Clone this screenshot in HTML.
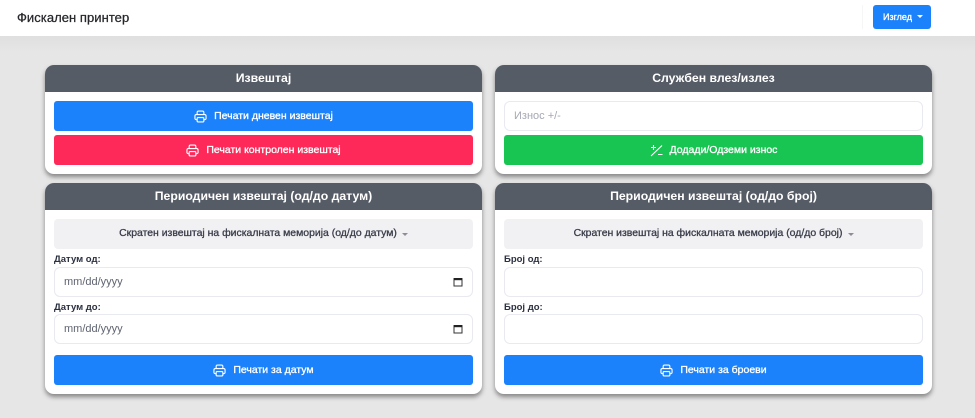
<!DOCTYPE html>
<html lang="mk"><head><meta charset="utf-8"><title>Фискален принтер</title>
<style>
*{box-sizing:border-box}
html,body{margin:0;padding:0}
body{width:975px;height:418px;overflow:hidden;position:relative;background:#e6e6e6;font-family:"Liberation Sans",sans-serif;color:#2b3040}
.a{position:absolute}
.nav{left:0;top:0;width:975px;height:36px;background:#fff}
.shade{left:0;top:36px;width:975px;height:16px;background:linear-gradient(#dfdfdf,#e6e6e6)}
.brand{left:17px;top:9px;font-size:13px;line-height:17px;font-weight:400;color:#26272b;letter-spacing:.05px;-webkit-text-stroke:.25px #26272b}
.view{left:873px;top:5px;width:58px;height:24px;background:#1b82fb;border-radius:3px;color:#fff;font-size:9px;font-weight:400;-webkit-text-stroke:.3px #fff;line-height:24px;padding-left:10px}
.view i,.dd i{position:absolute;width:0;height:0;border-left:3px solid transparent;border-right:3px solid transparent}
.view i{left:44px;top:10px;border-top:3px solid #fff;-webkit-text-stroke:0}
.card{background:#fff;border-radius:9px;box-shadow:0 3px 5px rgba(0,0,0,.42);overflow:hidden}
.hd{left:0;top:0;width:437px;height:27px;background:#565c66;color:#fff;text-align:center;font-size:12.25px;font-weight:700;line-height:27px}
.btn{width:419px;height:30px;border-radius:3px;color:#fff;font-size:10.5px;font-weight:400;-webkit-text-stroke:.3px #fff;line-height:31px;text-align:center}
.btn span{display:inline-flex;align-items:center;justify-content:center;gap:7px}
.btn svg{display:block;-webkit-text-stroke:0}
.blue{background:#1b82fb}.red{background:#fe2859}.green{background:#19c552}
.inp{width:419px;height:30px;border:1px solid #e8e9f1;border-radius:6px;background:#fff;font-size:11px;line-height:29px;padding-left:9px;color:#5f6470}
.dd{width:419px;height:30px;border-radius:4px;background:#f1f1f3;font-size:10.45px;font-weight:400;line-height:30px;text-align:center;padding-right:11px;color:#3a3d4a;-webkit-text-stroke:.3px #3a3d4a}
.dd i{border-top:3px solid #8b8e96}
.lb{font-size:9.5px;font-weight:700;line-height:12px;color:#2b3040}
</style></head><body>
<div class="a shade"></div>
<div class="a nav"></div>
<div class="a" style="left:862px;top:5px;width:1px;height:24px;background:#f6f6f6"></div>
<div class="a brand">Фискален принтер</div>
<div class="a view">Изглед<i></i></div>

<svg width="0" height="0" style="position:absolute"><defs>
<symbol id="pr" viewBox="0 0 14 14"><path d="M3.4 4.9V2.6a1.5 1.5 0 0 1 1.5-1.5h4.2a1.5 1.5 0 0 1 1.5 1.5v2.3M3.4 10.4H2.4A1.4 1.4 0 0 1 1 9V6.4A1.5 1.5 0 0 1 2.5 4.9h9A1.5 1.5 0 0 1 13 6.4V9a1.4 1.4 0 0 1-1.4 1.4h-1M4.4 8.2h5.2a1 1 0 0 1 1 1v2.6a1 1 0 0 1-1 1H4.4a1 1 0 0 1-1-1V9.200a1 1 0 0 1 1-1z" fill="none" stroke="#fff" stroke-width="1.2"/></symbol>
<symbol id="cal" viewBox="0 0 10 10"><path d="M1 1.600h8v7.400H1z" fill="none" stroke="#333" stroke-width="1"/><path d="M.8 1h8.400v2.200H.8z" fill="#222"/></symbol>
</defs></svg>

<div class="a card" style="left:45px;top:65px;width:437px;height:109px">
 <div class="a hd">Извештај</div>
 <div class="a btn blue" style="left:9px;top:36px"><span><svg width="13" height="13"><use href="#pr"/></svg>Печати дневен извештај</span></div>
 <div class="a btn red" style="left:9px;top:70px"><span><svg width="13" height="13"><use href="#pr"/></svg>Печати контролен извештај</span></div>
</div>

<div class="a card" style="left:495px;top:65px;width:437px;height:109px">
 <div class="a hd">Службен влез/излез</div>
 <div class="a inp" style="left:9px;top:36px;color:#a5a8b4;padding-left:9px">Износ +/-</div>
 <div class="a btn green" style="left:9px;top:70px"><span><svg width="13" height="13" viewBox="0 0 13 13"><path d="M1 12 12 1.500M3.500 1v5M1 3.500h5M8 10.500h4.500" fill="none" stroke="#fff" stroke-width="1.100"/></svg>Додади/Одземи износ</span></div>
</div>

<div class="a card" style="left:45px;top:183px;width:437px;height:211px">
 <div class="a hd">Периодичен извештај (од/до датум)</div>
 <div class="a dd" style="left:9px;top:36px">Скратен извештај на фискалната меморија (од/до датум)<i style="left:348px;top:14px"></i></div>
 <div class="a lb" style="left:9px;top:71px">Датум од:</div>
 <div class="a inp" style="left:9px;top:84px">mm/dd/yyyy<svg class="a" style="left:398px;top:9px" width="10" height="10"><use href="#cal"/></svg></div>
 <div class="a lb" style="left:9px;top:119px">Датум до:</div>
 <div class="a inp" style="left:9px;top:131px">mm/dd/yyyy<svg class="a" style="left:398px;top:9px" width="10" height="10"><use href="#cal"/></svg></div>
 <div class="a btn blue" style="left:9px;top:172px"><span><svg width="13" height="13"><use href="#pr"/></svg>Печати за датум</span></div>
</div>

<div class="a card" style="left:495px;top:183px;width:437px;height:211px">
 <div class="a hd">Периодичен извештај (од/до број)</div>
 <div class="a dd" style="left:9px;top:36px">Скратен извештај на фискалната меморија (од/до број)<i style="left:344px;top:14px"></i></div>
 <div class="a lb" style="left:9px;top:71px">Број од:</div>
 <div class="a inp" style="left:9px;top:84px"></div>
 <div class="a lb" style="left:9px;top:119px">Број до:</div>
 <div class="a inp" style="left:9px;top:131px"></div>
 <div class="a btn blue" style="left:9px;top:172px"><span><svg width="13" height="13"><use href="#pr"/></svg>Печати за броеви</span></div>
</div>
</body></html>
